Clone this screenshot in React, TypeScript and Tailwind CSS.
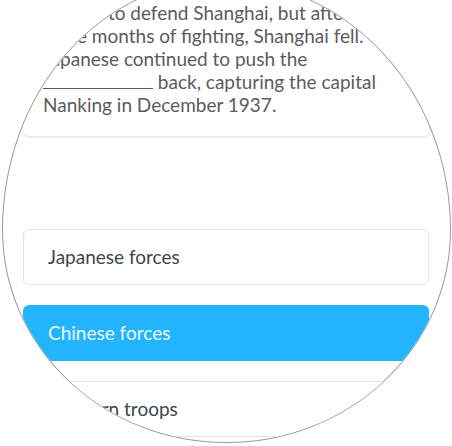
export default function App() {
  const options = [
    { label: "Japanese forces", selected: false },
    { label: "Chinese forces", selected: true },
    { label: "Western troops", selected: false },
  ];

  return (
    <div className="w-[452px] h-[446px] overflow-hidden bg-white" style={{ fontFamily: "Lato, 'Noto Sans', sans-serif" }}>
      {/* magnifier lens: a slightly lopsided round shape */}
      <div className="ml-[2px] mt-[-20px] w-[449px] h-[463px] rounded-tl-[219px_250px] rounded-tr-[230px_250px] rounded-br-[224px_213px] rounded-bl-[224px_213px] overflow-hidden border border-[#9b9b9b] bg-white pl-5 pr-[21px]">
        {/* question card, scrolled so its first line sits above the lens */}
        <div className="mt-[-23px] rounded-md bg-white p-5 shadow-[0_1px_3px_rgba(0,0,0,0.14)] text-[19px] leading-[23px] text-[#5b5b5b] whitespace-nowrap">
          The Chinese army fought
          <br />
          bravely to defend Shanghai, but after
          <br />
          three months of fighting, Shanghai fell. The
          <br />
          Japanese continued to push the
          <br />
          <span className="inline-block w-[110px] h-0 border-b border-[#5b5b5b] align-baseline" /> back, capturing the capital
          <br />
          Nanking in December 1937.
        </div>

        {/* answer options */}
        <div className="mt-[93px] flex flex-col gap-5">
          {options.map((o) => (
            <div
              key={o.label}
              className={
                o.selected
                  ? "h-14 flex items-center rounded-md bg-[#22b5fe] px-[25px] text-[19px] text-[#eef8ff]"
                  : "h-14 flex items-center rounded-md border border-[#e3e3e3] bg-white px-6 text-[19px] text-[#3d4550]"
              }
            >
              {o.label}
            </div>
          ))}
        </div>
      </div>
    </div>
  );
}
